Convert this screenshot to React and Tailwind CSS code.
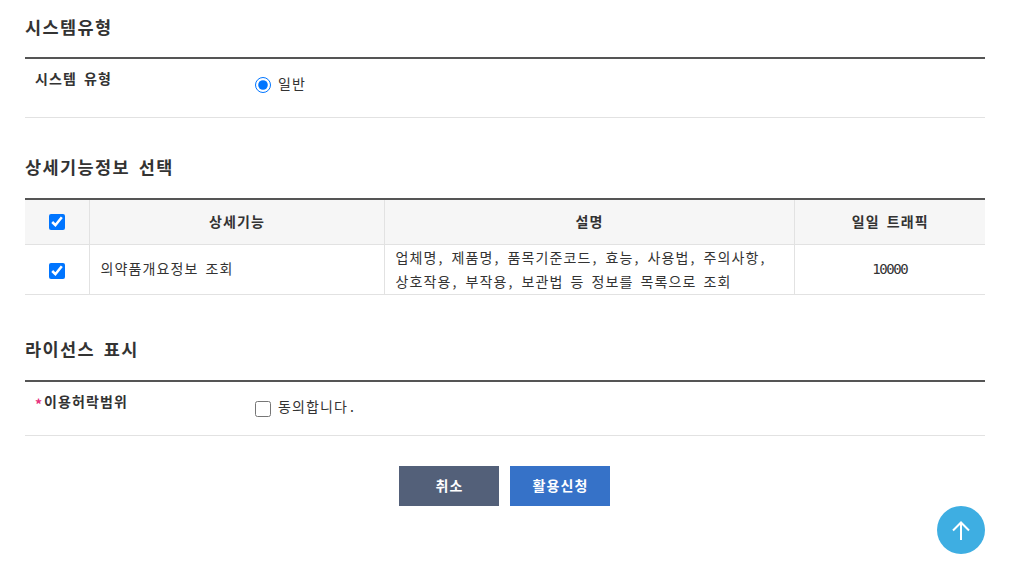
const Section = ({ title, pad, children }) => (
  <div>
    <h3 className={`text-[17.5px] leading-[26px] font-bold text-[#333] tracking-[1.4px] [word-spacing:3.43px] ${pad} border-b-2 border-[#555]`}>
      {title}
    </h3>
    {children}
  </div>
);

const Row = ({ label, required, height, children }) => (
  <div className={`flex ${height} border-b border-[#e2e2e2]`}>
    <div className="w-[230px] pl-[10px] pt-[9px] text-[14px] leading-[20px] font-bold text-[#333]">
      {required && <span className="relative top-[3px] inline-block w-[9px] text-[#e6307e]">*</span>}
      {label}
    </div>
    <div className="pt-[14px] text-[14px] leading-[20px] text-[#333]">
      {children}
    </div>
  </div>
);

const Comma = () => <span className="pl-[1px] pr-[1px]">,</span>;

export default function App() {
  return (
    <div className="font-['Noto_Sans_CJK_KR',sans-serif] tracking-[1.12px] [word-spacing:2.74px] relative w-[1014px] h-[585px] overflow-hidden bg-white pl-[25px] pr-[29px] pt-[14px]">
      <Section title="시스템유형" pad="pb-[17px]">
        <Row label="시스템 유형" height="h-[59px]">
          <label className="flex items-start">
            <input type="radio" defaultChecked className="w-4 h-4 m-0 mt-[4px] accent-[#0075ff]" />
            <span className="ml-[7px]">일반</span>
          </label>
        </Row>
      </Section>

      <div className="mt-[36px]">
        <Section title="상세기능정보 선택" pad="pb-[18px]">
          <table className="w-full table-fixed border-collapse text-[14px] text-[#333]">
            <colgroup>
              <col className="w-[64px]" />
              <col className="w-[295px]" />
              <col className="w-[410px]" />
              <col />
            </colgroup>
            <thead>
              <tr className="h-[44px] bg-[#f6f6f6] border-b border-[#e2e2e2]">
                <th className="border-r border-[#e2e2e2] pb-[2px]">
                  <input type="checkbox" defaultChecked className="w-4 h-4 m-0 align-middle accent-[#0075ff]" />
                </th>
                <th className="border-r border-[#e2e2e2] font-bold pl-[1px]">상세기능</th>
                <th className="border-r border-[#e2e2e2] font-bold pl-[1px]">설명</th>
                <th className="font-bold pl-[1px]">일일 트래픽</th>
              </tr>
            </thead>
            <tbody>
              <tr className="h-[50px] border-b border-[#e2e2e2]">
                <td className="border-r border-[#e2e2e2] text-center">
                  <input type="checkbox" defaultChecked className="w-4 h-4 m-0 align-middle accent-[#0075ff]" />
                </td>
                <td className="border-r border-[#e2e2e2] pl-[11px] pr-[10px] pb-[2px]">의약품개요정보 조회</td>
                <td className="border-r border-[#e2e2e2] pl-[11px] pr-[10px] align-top leading-[24px] whitespace-nowrap">
                  업체명<Comma /> 제품명<Comma /> 품목기준코드<Comma /> 효능<Comma /> 사용법<Comma /> 주의사항<Comma />
                  <br />
                  상호작용<Comma /> 부작용<Comma /> 보관법 등 정보를 목록으로 조회
                </td>
                <td className="text-center font-['DejaVu_Sans_Mono',monospace] tracking-[-1.43px]">10000</td>
              </tr>
            </tbody>
          </table>
        </Section>
      </div>

      <div className="mt-[41px]">
        <Section title="라이선스 표시" pad="pb-[18px]">
          <Row label="이용허락범위" required height="h-[54px]">
            <label className="flex items-start">
              <input type="checkbox" className="w-4 h-4 m-0 mt-[5px] accent-[#0075ff]" />
              <span className="ml-[7px]">
                동의합니다<span className="pl-[2px]">.</span>
              </span>
            </label>
          </Row>
        </Section>
      </div>

      <div className="flex justify-center gap-[11px] mt-[30px] pr-[1px]">
        <button className="w-[100px] h-[40px] pl-[1px] pb-[1px] bg-[#536079] text-white text-[14px] font-bold">취소</button>
        <button className="w-[100px] h-[40px] pl-[1px] pb-[1px] bg-[#3672c8] text-white text-[14px] font-bold">활용신청</button>
      </div>

      <button className="absolute left-[937px] top-[506px] w-[48px] h-[48px] rounded-full bg-[#3eaee2] flex items-center justify-center">
        <svg width="18" height="19" viewBox="0 0 18 19" fill="none" stroke="white" strokeWidth="2">
          <path d="M9 19V1.500M1 9.500L9 1.500l8 8" />
        </svg>
      </button>
    </div>
  );
}
